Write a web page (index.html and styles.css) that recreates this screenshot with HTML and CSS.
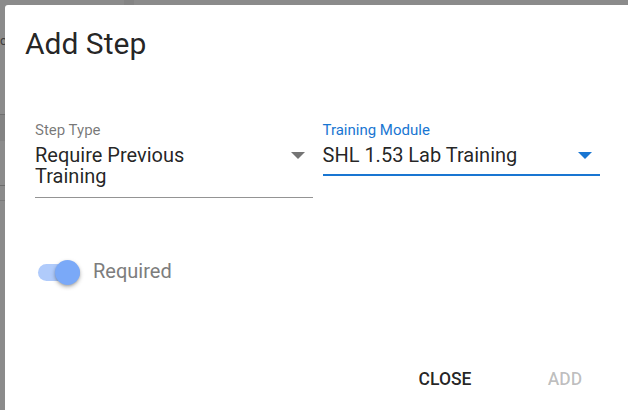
FILE: index.html
```html
<!DOCTYPE html>
<html lang="en">
<head>
<meta charset="utf-8">
<title>Add Step</title>
<link rel="stylesheet" href="styles.css">
</head>
<body>
  <div class="backdrop">
    <div class="bg-top"><span class="bg-sep"></span></div>
    <div class="bg-text">c</div>
    <div class="bg-band"></div>
    <div class="bg-rule"></div>
    <div class="bg-rule second"></div>
  </div>

  <div class="dialog" role="dialog">
    <div class="dialog-title">Add Step</div>

    <div class="dialog-body">
      <div class="fields">
        <div class="field">
          <div class="field-label">Step Type</div>
          <div class="select">
            <div class="value">Require Previous Training</div>
            <span class="arrow">
              <svg width="14" height="7" viewBox="0 0 14 7"><path d="M0 0H14L7 7Z" fill="#757575"/></svg>
            </span>
          </div>
        </div>
        <div class="field focused">
          <div class="field-label">Training Module</div>
          <div class="select">
            <div class="value">SHL 1.53 Lab Training</div>
            <span class="arrow">
              <svg width="14" height="7" viewBox="0 0 14 7"><path d="M0 0H14L7 7Z" fill="#1976d2"/></svg>
            </span>
          </div>
        </div>
      </div>

      <div class="switch-row">
        <div class="switch">
          <span class="track"></span>
          <span class="thumb"></span>
        </div>
        <span class="switch-label">Required</span>
      </div>
    </div>

    <div class="dialog-actions">
      <button class="btn">Close</button>
      <button class="btn disabled">Add</button>
    </div>
  </div>
</body>
</html>
```

FILE: styles.css
```css
html, body {
  margin: 0;
  height: 100%;
  overflow: hidden;
}

body {
  background: #8b8b8b;
  font-family: Roboto, "Noto Sans", "Liberation Sans", sans-serif;
  position: relative;
}

/* page behind the scrim */
.backdrop {
  height: 100%;
}

.bg-top {
  height: 5px;
  display: flex;
}

.bg-sep {
  width: 10px;
  margin-left: 124px;
  background: #848484;
}

.bg-text {
  margin-top: 28px;
  font-size: 13px;
  line-height: 16px;
  color: #3c3c3c;
}

.bg-band {
  margin-top: 65px;
  height: 26px;
  border-top: 1px solid #6f6f6f;
  background: #838383;
}

.bg-rule {
  margin-top: 44px;
  height: 1px;
  background: #6c6c6c;
}

.bg-rule.second {
  margin-top: 14px;
  background: #7a7a7a;
}

/* dialog */
.dialog {
  position: absolute;
  left: 5px;
  top: 5px;
  width: 625px;
  height: 407px;
  background: #fff;
  border-radius: 3px 0 0 0;
  display: flex;
  flex-direction: column;
}

.dialog-title {
  padding: 19px 20px 21px;
  font-size: 30px;
  line-height: 40px;
  font-weight: 400;
  color: rgba(0, 0, 0, 0.87);
}

.dialog-body {
  padding: 36px 30px 0;
}

.fields {
  display: grid;
  grid-template-columns: 1fr 1fr;
  gap: 10px;
  align-items: start;
}

.field-label {
  font-size: 15px;
  line-height: 18px;
  color: rgba(0, 0, 0, 0.54);
}

.focused .field-label {
  color: #1976d2;
}

.select {
  display: flex;
  align-items: flex-start;
  padding: 6px 0 10px;
  border-bottom: 1px solid rgba(0, 0, 0, 0.42);
}

.focused .select {
  padding-bottom: 8px;
  border-bottom: 2px solid #1976d2;
}

.value {
  flex: 1;
  padding-right: 40px;
  font-size: 20px;
  line-height: 21px;
  color: rgba(0, 0, 0, 0.87);
}

.arrow {
  width: 30px;
  height: 21px;
  display: flex;
  align-items: center;
  justify-content: center;
}

.arrow svg {
  display: block;
}

.switch-row {
  margin-top: 62px;
  display: flex;
  align-items: center;
  height: 25px;
}

.switch {
  position: relative;
  width: 50px;
  height: 25px;
  margin-right: 8px;
}

.track {
  position: absolute;
  left: 3px;
  top: 4px;
  width: 42px;
  height: 17px;
  border-radius: 9px;
  background: #b0cbfb;
}

.thumb {
  position: absolute;
  left: 20px;
  top: 0;
  width: 25px;
  height: 25px;
  border-radius: 50%;
  background: #7aa9f8;
  box-shadow: 0 2px 4px rgba(0, 0, 0, 0.28), 0 1px 2px rgba(0, 0, 0, 0.12);
}

.switch-label {
  font-size: 20px;
  line-height: 23px;
  padding-bottom: 2px;
  color: #7d7d7d;
}

.dialog-actions {
  margin-top: auto;
  padding: 10px;
  display: flex;
  justify-content: flex-end;
  gap: 10px;
}

.btn {
  height: 45px;
  min-width: 110px;
  padding: 0 20px;
  border: 0;
  background: transparent;
  font-family: Roboto, "Noto Sans", "Liberation Sans", sans-serif;
  font-size: 17.5px;
  font-weight: 500;
  line-height: 45px;
  text-transform: uppercase;
  color: rgba(0, 0, 0, 0.87);
  cursor: pointer;
}

.btn.disabled {
  color: rgba(0, 0, 0, 0.26);
  cursor: default;
}
```
